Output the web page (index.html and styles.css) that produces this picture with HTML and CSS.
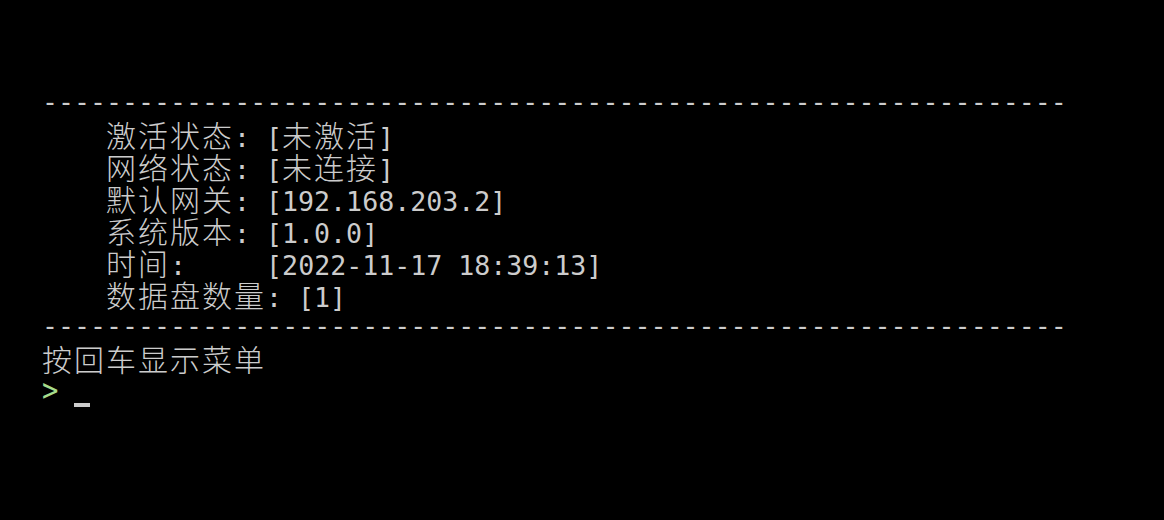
FILE: index.html
```html
<!DOCTYPE html>
<html lang="zh-CN">
<head>
<meta charset="utf-8">
<link rel="stylesheet" href="styles.css">
</head>
<body>
<div class="term">
<div class="line">----------------------------------------------------------------</div>
<div class="line">    <span class="cjk">激活状态</span>: [<span class="cjk">未激活</span>]</div>
<div class="line">    <span class="cjk">网络状态</span>: [<span class="cjk">未连接</span>]</div>
<div class="line">    <span class="cjk">默认网关</span>: [192.168.203.2]</div>
<div class="line">    <span class="cjk">系统版本</span>: [1.0.0]</div>
<div class="line">    <span class="cjk">时间</span>:     [2022-11-17 18:39:13]</div>
<div class="line">    <span class="cjk">数据盘数量</span>: [1]</div>
<div class="line">----------------------------------------------------------------</div>
<div class="line"><span class="cjk">按回车显示菜单</span></div>
<div class="line"><span class="prompt">&gt;</span> <span class="cursor"></span></div>
</div>
</body>
</html>
```
FILE: styles.css
```css
html, body {
  margin: 0;
  padding: 0;
  background: #000;
  width: 1164px;
  height: 520px;
  overflow: hidden;
}
.term {
  padding: 86px 0 0 42px;
  color: #cccccc;
  font-family: "DejaVu Sans Mono", "Liberation Mono", monospace;
  font-size: 26.6px;
}
.line {
  white-space: pre;
  height: 32px;
  line-height: 32px;
}
.cjk {
  font-family: "Noto Sans CJK SC", sans-serif;
  font-size: 30px;
  line-height: 32px;
  font-weight: 300;
  letter-spacing: 2px;
}
.prompt {
  display: inline-block;
  width: 16px;
  color: #a6dc8c;
  font-size: 32px;
  line-height: 32px;
  transform: scaleX(0.85);
  transform-origin: left center;
}
.cursor {
  display: inline-block;
  width: 16px;
  height: 4px;
  background: #cccccc;
  vertical-align: -6px;
}
```
